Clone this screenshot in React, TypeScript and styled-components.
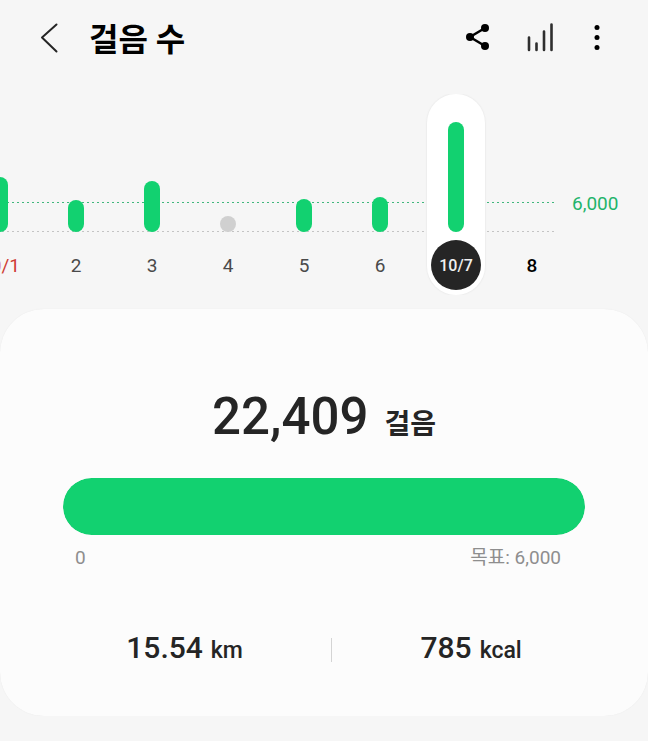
import React from "react";
import styled, { createGlobalStyle } from "styled-components";

const green = "#12d170";

const GlobalStyle = createGlobalStyle`
  *, *::before, *::after { box-sizing: border-box; }
  body {
    margin: 0;
    background: #f6f6f6;
    color: #252525;
    font-family: Roboto, "Noto Sans CJK KR", sans-serif;
  }
`;

const Header = styled.header`
  display: flex;
  align-items: center;
  gap: 28px;
  height: 76px;
  padding: 0 35px 0 33px;
`;

const Title = styled.h1`
  flex: 1;
  margin: 0 0 0 -4px;
  padding-top: 4px;
  color: #000;
  font-size: 32px;
  font-weight: 700;
  line-height: 40px;
`;

const IconButton = styled.button`
  display: flex;
  width: 32px;
  height: 32px;
  padding: 0;
  border: 0;
  background: none;
  color: #000;
  cursor: pointer;
`;

const Chart = styled.section`
  display: flex;
  padding-top: 18px;
`;

const Plot = styled.div`
  flex: 1;
  min-width: 0;
  padding-right: 16px;
  overflow: hidden;
  background-image:
    linear-gradient(90deg, #3fb77c 2px, transparent 2px),
    linear-gradient(90deg, #c4c4c4 2px, transparent 2px);
  background-size: 5px 1px;
  background-position: 2px 108px, 2px 137px;
  background-repeat: repeat-x;
  background-origin: content-box;
  background-clip: content-box;
`;

const Days = styled.ol`
  display: flex;
  justify-content: flex-end;
  margin: 0 -16px 0 0;
  padding: 0;
  list-style: none;
`;

const DayItem = styled.li`
  display: flex;
  flex: 0 0 76px;
  justify-content: center;
`;

const DayButton = styled.button<{ $selected?: boolean }>`
  display: flex;
  flex-direction: column;
  align-items: center;
  gap: 8px;
  width: 58px;
  padding: 28px 0 5px;
  border: 0;
  border-radius: 29px;
  background: ${(p) => (p.$selected ? "#fff" : "none")};
  box-shadow: ${(p) => (p.$selected ? "0 0 1px 1px #eeeeee" : "none")};
  font-family: inherit;
  cursor: pointer;
`;

const Track = styled.span`
  display: flex;
  align-items: flex-end;
  height: 110px;
`;

const Bar = styled.span<{ $empty?: boolean }>`
  width: 16px;
  border-radius: 8px;
  background: ${(p) => (p.$empty ? "#d0d0d0" : green)};
`;

type Tone = "normal" | "holiday" | "selected" | "today";
const toneColor: Record<Tone, string> = {
  normal: "#4a4a4a",
  holiday: "#cf3d35",
  selected: "#f0f0f0",
  today: "#000",
};

const DayLabel = styled.span<{ $tone: Tone }>`
  display: flex;
  align-items: center;
  justify-content: center;
  width: 50px;
  height: 50px;
  border-radius: 50%;
  white-space: nowrap;
  background: ${(p) => (p.$tone === "selected" ? "#252525" : "none")};
  color: ${(p) => toneColor[p.$tone]};
  font-size: ${(p) => (p.$tone === "selected" ? 16 : 19)}px;
  font-weight: ${(p) =>
    p.$tone === "today" || p.$tone === "selected" ? 500 : 400};
`;

const GoalMark = styled.div`
  flex: 0 0 78px;
  padding: 100px 0 0 2px;
  color: #1fb46b;
  font-size: 19px;
  line-height: 20px;
`;

const Card = styled.main`
  margin-top: 14px;
  padding: 80px 0 45px;
  border-radius: 44px;
  background: #fcfcfc;
  box-shadow: 0 0 1px #e4e4e4;
`;

const Total = styled.p`
  display: flex;
  align-items: baseline;
  justify-content: center;
  gap: 16px;
  margin: 0;
  font-size: 51px;
  font-weight: 500;
  line-height: 56px;
`;

const TotalUnit = styled.span`
  font-size: 28px;
  font-weight: 700;
`;

const Goal = styled.div`
  margin: 25px 63px 0;
`;

const Progress = styled.div`
  height: 57px;
  border-radius: 29px;
  background: #ececec;
  overflow: hidden;
`;

const ProgressFill = styled.div`
  height: 100%;
  border-radius: 29px;
  background: ${green};
`;

const Scale = styled.div`
  display: flex;
  justify-content: space-between;
  margin-top: 11px;
  padding: 0 24px 0 12px;
  color: #8e8e8e;
  font-size: 19px;
  line-height: 24px;
`;

const Stats = styled.div`
  display: flex;
  align-items: center;
  margin-top: 58px;
  padding: 0 38px;
`;

const Stat = styled.p`
  display: flex;
  flex: 1 1 auto;
  align-items: baseline;
  justify-content: center;
  gap: 8px;
  margin: 0;
  font-size: 30px;
  font-weight: 500;
  line-height: 40px;
`;

const StatUnit = styled.span`
  font-size: 23px;
`;

const Divider = styled.span`
  width: 1px;
  height: 24px;
  background: #d4d4d4;
`;

const Svg = ({ children }: { children: React.ReactNode }) => (
  <svg width="32" height="32" viewBox="0 0 32 32" fill="none" aria-hidden="true">
    {children}
  </svg>
);

const BackIcon = () => (
  <Svg>
    <path d="M23.500 2.500 9 15.500l14.500 14" stroke="#252525" strokeWidth="2" strokeLinecap="round" strokeLinejoin="round" />
  </Svg>
);

const ShareIcon = () => (
  <Svg>
    <path d="M24 6 9 15l15 9" stroke="currentColor" strokeWidth="2.500" />
    <g fill="currentColor">
      <circle cx="24" cy="6" r="4" />
      <circle cx="9" cy="15" r="4" />
      <circle cx="24" cy="24" r="4" />
    </g>
  </Svg>
);

const ChartIcon = () => (
  <Svg>
    <path d="M8 15.500v12.500M15.500 21.500v6.500M23 9.500v18.500M30.500 2.500v25.500" stroke="#2f2f2f" strokeWidth="2.600" strokeLinecap="round" />
  </Svg>
);

const MoreIcon = () => (
  <Svg>
    <g fill="currentColor">
      <circle cx="16" cy="5.500" r="2.500" />
      <circle cx="16" cy="15.500" r="2.500" />
      <circle cx="16" cy="25.500" r="2.500" />
    </g>
  </Svg>
);

const days: { label: string; bar: number; tone: Tone; empty?: boolean }[] = [
  { label: "10/1", bar: 55, tone: "holiday" },
  { label: "2", bar: 32, tone: "normal" },
  { label: "3", bar: 51, tone: "normal" },
  { label: "4", bar: 16, tone: "normal", empty: true },
  { label: "5", bar: 33, tone: "normal" },
  { label: "6", bar: 35, tone: "normal" },
  { label: "10/7", bar: 110, tone: "selected" },
  { label: "8", bar: 0, tone: "today" },
];

const steps = 22409;
const goal = 6000;

export default function App() {
  const percent = Math.min(100, (steps / goal) * 100);
  return (
    <>
      <GlobalStyle />
      <Header>
        <IconButton aria-label="뒤로"><BackIcon /></IconButton>
        <Title>걸음 수</Title>
        <IconButton aria-label="공유"><ShareIcon /></IconButton>
        <IconButton aria-label="통계"><ChartIcon /></IconButton>
        <IconButton aria-label="더보기"><MoreIcon /></IconButton>
      </Header>
      <Chart>
        <Plot>
          <Days>
            {days.map((d) => (
              <DayItem key={d.label}>
                <DayButton $selected={d.tone === "selected"} aria-pressed={d.tone === "selected"}>
                  <Track>
                    <Bar $empty={d.empty} style={{ height: d.bar }} />
                  </Track>
                  <DayLabel $tone={d.tone}>{d.label}</DayLabel>
                </DayButton>
              </DayItem>
            ))}
          </Days>
        </Plot>
        <GoalMark>6,000</GoalMark>
      </Chart>
      <Card>
        <Total>
          22,409 <TotalUnit>걸음</TotalUnit>
        </Total>
        <Goal>
          <Progress role="progressbar" aria-label="걸음 수" aria-valuemin={0} aria-valuemax={goal} aria-valuenow={Math.min(steps, goal)}>
            <ProgressFill style={{ width: `${percent}%` }} />
          </Progress>
          <Scale>
            <span>0</span>
            <span>목표: 6,000</span>
          </Scale>
        </Goal>
        <Stats>
          <Stat>15.54 <StatUnit>km</StatUnit></Stat>
          <Divider />
          <Stat>785 <StatUnit>kcal</StatUnit></Stat>
        </Stats>
      </Card>
    </>
  );
}
